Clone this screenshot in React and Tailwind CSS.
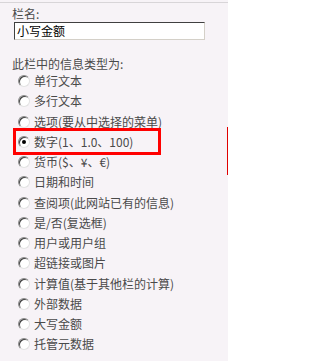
import React from "react";

const TYPES = [
  "单行文本",
  "多行文本",
  "选项(要从中选择的菜单)",
  "数字(1、1.0、100)",
  "货币($、¥、€)",
  "日期和时间",
  "查阅项(此网站已有的信息)",
  "是/否(复选框)",
  "用户或用户组",
  "超链接或图片",
  "计算值(基于其他栏的计算)",
  "外部数据",
  "大写金额",
  "托管元数据",
];

const SELECTED = 3;

function Radio({ checked }) {
  return (
    <span className="relative flex h-[12px] w-[12px] shrink-0 items-center justify-center rounded-full border border-[#8a8a8a] border-r-[#e2e2e2] border-b-[#e2e2e2] bg-white shadow-[inset_1px_1px_0_#404040]">
      {checked && <span className="h-[4px] w-[4px] rounded-full bg-black" />}
    </span>
  );
}

export default function App() {
  return (
    <div
      className="relative h-[361px] w-[228px] overflow-hidden bg-[#f7f3f7] text-[12px] text-[#4a4a4a]"
      style={{ fontFamily: '"Noto Sans CJK SC", "Liberation Sans", sans-serif' }}
    >
      <div className="mt-[2px] h-px bg-[#d8d5d8]" />

      <div className="pl-[12px] pt-[4px] leading-[14px]">栏名:</div>
      <div className="ml-[14px] mt-[1px] flex h-[18px] w-[191px] items-center border border-[#404040] border-r-[#d4d0c8] border-b-[#d4d0c8] bg-white pl-[2px] leading-none text-black">
        小写金额
      </div>

      <div className="mt-[17px] pl-[12px] leading-[14px]">此栏中的信息类型为:</div>

      <ul className="mt-0 flex flex-col">
        {TYPES.map((t, i) => (
          <li key={t} className="flex h-[20.25px] items-center pl-[18px]">
            <span
              className={
                i === SELECTED
                  ? "flex items-center gap-[4px] outline outline-[3px] outline-[#ff0000] -ml-[2px] h-[21px] w-[142px] pl-[2px]"
                  : "flex items-center gap-[4px]"
              }
            >
              <Radio checked={i === SELECTED} />
              <span className="whitespace-nowrap leading-none">{t}</span>
            </span>
          </li>
        ))}
      </ul>

      <div className="absolute right-0 top-[127px] h-[48px] w-px bg-[#e00000]" />
    </div>
  );
}
